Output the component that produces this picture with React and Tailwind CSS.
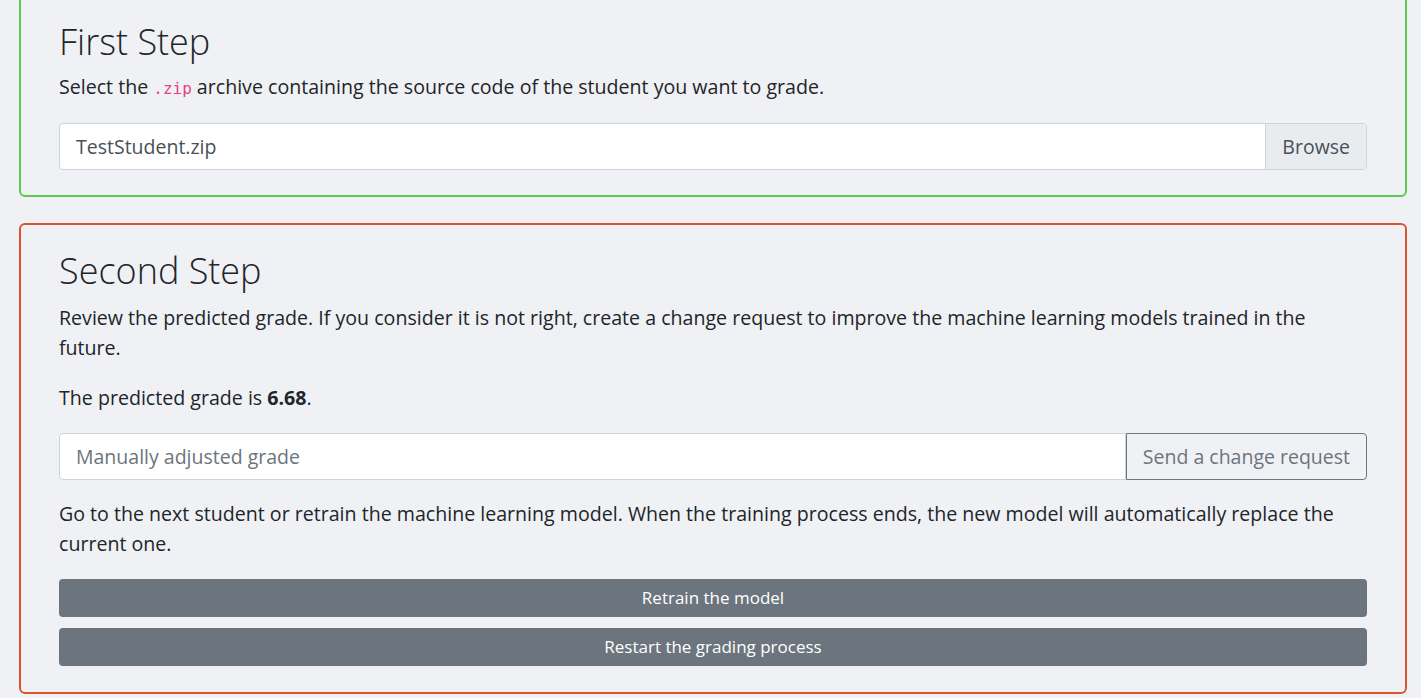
export default function App() {
  const font = { fontFamily: "'Open Sans', 'Liberation Sans', sans-serif" };
  return (
    <div className="min-h-screen bg-[#f0f1f5] text-[#212529] pl-[19px] pr-[14px] pb-[4px]" style={font}>
      <div className="mt-[-7px] border-2 border-[#5fc74d] rounded-[6px] px-[38px] pt-[25px] pb-[25px]">
        <h2 className="text-[36px] leading-[44px] font-light mb-[8px]">First Step</h2>
        <p className="text-[19.6px] leading-[30px] mb-[19px]">
          Select the <code className="text-[#e83e8c] text-[16px]" style={{ fontFamily: "'DejaVu Sans Mono', monospace" }}>.zip</code> archive containing the source code of the student you want to grade.
        </p>
        <div className="flex h-[47px] rounded-[4px] border border-[#ced4da] bg-white overflow-hidden">
          <div className="flex-1 flex items-center px-[16px] text-[19.5px] text-[#495057]">TestStudent.zip</div>
          <div className="flex items-center px-[16px] bg-[#e9ecef] border-l border-[#ced4da] text-[19.5px] text-[#495057]">Browse</div>
        </div>
      </div>

      <div className="mt-[26px] border-2 border-[#d9542f] rounded-[6px] px-[38px] pt-[24px] pb-[26px]">
        <h2 className="text-[36px] leading-[44px] font-light mb-[10px]">Second Step</h2>
        <p className="text-[19.6px] leading-[30px] mb-[20px]">
          Review the predicted grade. If you consider it is not right, create a change request to improve the machine learning models trained in the future.
        </p>
        <p className="text-[19.6px] leading-[30px] mb-[20px]">
          The predicted grade is <b className="font-bold">6.68</b>.
        </p>
        <div className="flex h-[47px] mb-[19px]">
          <div className="flex-1 flex items-center px-[16px] text-[19.5px] text-[#6c757d] bg-white border border-[#ced4da] rounded-l-[4px]">Manually adjusted grade</div>
          <div className="flex items-center px-[16px] border border-[#6c757d] rounded-r-[4px] text-[19.5px] text-[#6c757d]">Send a change request</div>
        </div>
        <p className="text-[19.6px] leading-[30px] mb-[20px]">
          Go to the next student or retrain the machine learning model. When the training process ends, the new model will automatically replace the current one.
        </p>
        <div className="flex flex-col gap-[11px]">
          <div className="h-[38px] rounded-[4px] bg-[#6c757d] text-white text-[17px] flex items-center justify-center">Retrain the model</div>
          <div className="h-[38px] rounded-[4px] bg-[#6c757d] text-white text-[17px] flex items-center justify-center">Restart the grading process</div>
        </div>
      </div>
    </div>
  );
}
